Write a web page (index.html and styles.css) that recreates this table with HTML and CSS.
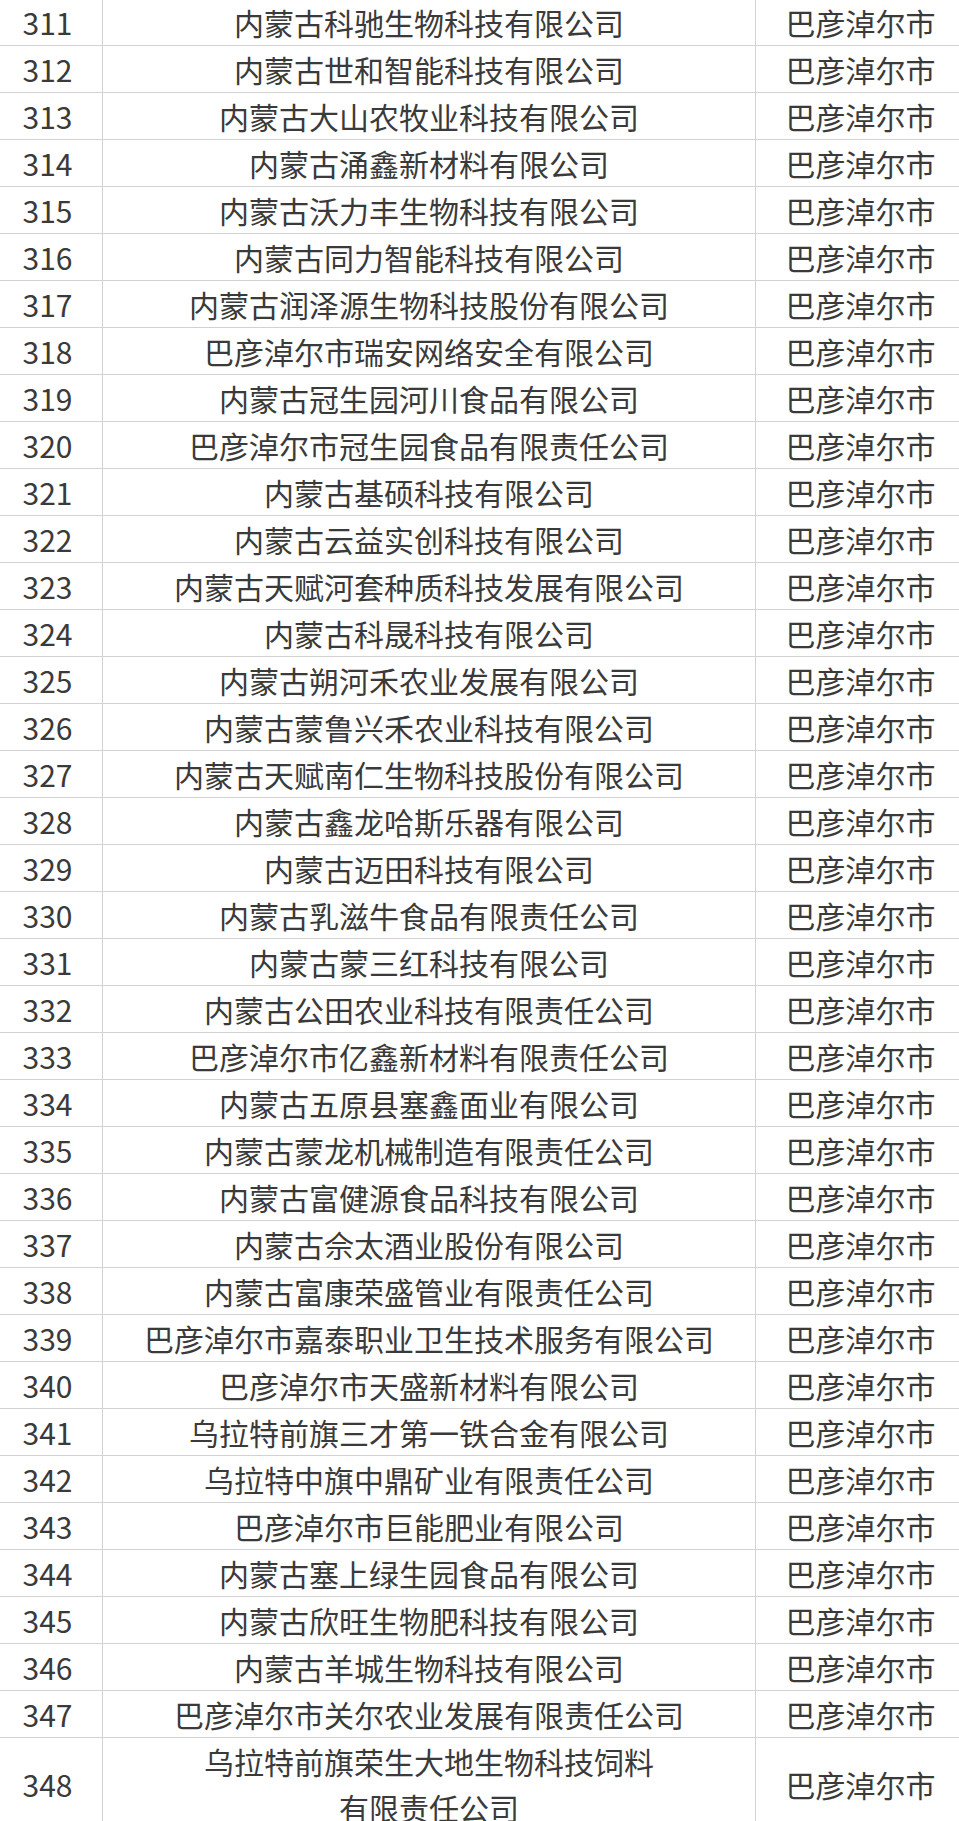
FILE: index.html
```html
<!DOCTYPE html>
<html lang="zh-CN">
<head>
<meta charset="utf-8">
<link rel="stylesheet" href="styles.css">
</head>
<body>
<div class="table">
  <div class="row"><div class="cell num">311</div><div class="cell name">内蒙古科驰生物科技有限公司</div><div class="cell city">巴彦淖尔市</div></div>
  <div class="row"><div class="cell num">312</div><div class="cell name">内蒙古世和智能科技有限公司</div><div class="cell city">巴彦淖尔市</div></div>
  <div class="row"><div class="cell num">313</div><div class="cell name">内蒙古大山农牧业科技有限公司</div><div class="cell city">巴彦淖尔市</div></div>
  <div class="row"><div class="cell num">314</div><div class="cell name">内蒙古涌鑫新材料有限公司</div><div class="cell city">巴彦淖尔市</div></div>
  <div class="row"><div class="cell num">315</div><div class="cell name">内蒙古沃力丰生物科技有限公司</div><div class="cell city">巴彦淖尔市</div></div>
  <div class="row"><div class="cell num">316</div><div class="cell name">内蒙古同力智能科技有限公司</div><div class="cell city">巴彦淖尔市</div></div>
  <div class="row"><div class="cell num">317</div><div class="cell name">内蒙古润泽源生物科技股份有限公司</div><div class="cell city">巴彦淖尔市</div></div>
  <div class="row"><div class="cell num">318</div><div class="cell name">巴彦淖尔市瑞安网络安全有限公司</div><div class="cell city">巴彦淖尔市</div></div>
  <div class="row"><div class="cell num">319</div><div class="cell name">内蒙古冠生园河川食品有限公司</div><div class="cell city">巴彦淖尔市</div></div>
  <div class="row"><div class="cell num">320</div><div class="cell name">巴彦淖尔市冠生园食品有限责任公司</div><div class="cell city">巴彦淖尔市</div></div>
  <div class="row"><div class="cell num">321</div><div class="cell name">内蒙古基硕科技有限公司</div><div class="cell city">巴彦淖尔市</div></div>
  <div class="row"><div class="cell num">322</div><div class="cell name">内蒙古云益实创科技有限公司</div><div class="cell city">巴彦淖尔市</div></div>
  <div class="row"><div class="cell num">323</div><div class="cell name">内蒙古天赋河套种质科技发展有限公司</div><div class="cell city">巴彦淖尔市</div></div>
  <div class="row"><div class="cell num">324</div><div class="cell name">内蒙古科晟科技有限公司</div><div class="cell city">巴彦淖尔市</div></div>
  <div class="row"><div class="cell num">325</div><div class="cell name">内蒙古朔河禾农业发展有限公司</div><div class="cell city">巴彦淖尔市</div></div>
  <div class="row"><div class="cell num">326</div><div class="cell name">内蒙古蒙鲁兴禾农业科技有限公司</div><div class="cell city">巴彦淖尔市</div></div>
  <div class="row"><div class="cell num">327</div><div class="cell name">内蒙古天赋南仁生物科技股份有限公司</div><div class="cell city">巴彦淖尔市</div></div>
  <div class="row"><div class="cell num">328</div><div class="cell name">内蒙古鑫龙哈斯乐器有限公司</div><div class="cell city">巴彦淖尔市</div></div>
  <div class="row"><div class="cell num">329</div><div class="cell name">内蒙古迈田科技有限公司</div><div class="cell city">巴彦淖尔市</div></div>
  <div class="row"><div class="cell num">330</div><div class="cell name">内蒙古乳滋牛食品有限责任公司</div><div class="cell city">巴彦淖尔市</div></div>
  <div class="row"><div class="cell num">331</div><div class="cell name">内蒙古蒙三红科技有限公司</div><div class="cell city">巴彦淖尔市</div></div>
  <div class="row"><div class="cell num">332</div><div class="cell name">内蒙古公田农业科技有限责任公司</div><div class="cell city">巴彦淖尔市</div></div>
  <div class="row"><div class="cell num">333</div><div class="cell name">巴彦淖尔市亿鑫新材料有限责任公司</div><div class="cell city">巴彦淖尔市</div></div>
  <div class="row"><div class="cell num">334</div><div class="cell name">内蒙古五原县塞鑫面业有限公司</div><div class="cell city">巴彦淖尔市</div></div>
  <div class="row"><div class="cell num">335</div><div class="cell name">内蒙古蒙龙机械制造有限责任公司</div><div class="cell city">巴彦淖尔市</div></div>
  <div class="row"><div class="cell num">336</div><div class="cell name">内蒙古富健源食品科技有限公司</div><div class="cell city">巴彦淖尔市</div></div>
  <div class="row"><div class="cell num">337</div><div class="cell name">内蒙古佘太酒业股份有限公司</div><div class="cell city">巴彦淖尔市</div></div>
  <div class="row"><div class="cell num">338</div><div class="cell name">内蒙古富康荣盛管业有限责任公司</div><div class="cell city">巴彦淖尔市</div></div>
  <div class="row"><div class="cell num">339</div><div class="cell name">巴彦淖尔市嘉泰职业卫生技术服务有限公司</div><div class="cell city">巴彦淖尔市</div></div>
  <div class="row"><div class="cell num">340</div><div class="cell name">巴彦淖尔市天盛新材料有限公司</div><div class="cell city">巴彦淖尔市</div></div>
  <div class="row"><div class="cell num">341</div><div class="cell name">乌拉特前旗三才第一铁合金有限公司</div><div class="cell city">巴彦淖尔市</div></div>
  <div class="row"><div class="cell num">342</div><div class="cell name">乌拉特中旗中鼎矿业有限责任公司</div><div class="cell city">巴彦淖尔市</div></div>
  <div class="row"><div class="cell num">343</div><div class="cell name">巴彦淖尔市巨能肥业有限公司</div><div class="cell city">巴彦淖尔市</div></div>
  <div class="row"><div class="cell num">344</div><div class="cell name">内蒙古塞上绿生园食品有限公司</div><div class="cell city">巴彦淖尔市</div></div>
  <div class="row"><div class="cell num">345</div><div class="cell name">内蒙古欣旺生物肥科技有限公司</div><div class="cell city">巴彦淖尔市</div></div>
  <div class="row"><div class="cell num">346</div><div class="cell name">内蒙古羊城生物科技有限公司</div><div class="cell city">巴彦淖尔市</div></div>
  <div class="row"><div class="cell num">347</div><div class="cell name">巴彦淖尔市关尔农业发展有限责任公司</div><div class="cell city">巴彦淖尔市</div></div>
  <div class="row"><div class="cell num">348</div><div class="cell name">乌拉特前旗荣生大地生物科技饲料<br>有限责任公司</div><div class="cell city">巴彦淖尔市</div></div>
</div>
</body>
</html>
```

FILE: styles.css
```css
html, body {
  margin: 0;
  padding: 0;
  background: #ffffff;
}
body {
  overflow: hidden;
  font-family: "Noto Sans CJK SC", "Noto Sans", sans-serif;
  color: #3a3a3a;
}
.table {
  width: 972px;
  margin-left: -7px;
  margin-top: -2px;
  border-top: 1px solid #d2d2d2;
}
.row {
  display: grid;
  grid-template-columns: 110px 653px 209px;
  border-bottom: 1px solid #d2d2d2;
}
.cell {
  font-size: 30px;
  line-height: 46px;
  text-align: center;
  display: flex;
  align-items: center;
  justify-content: center;
}
.num, .name {
  border-right: 1px solid #d2d2d2;
}
.name {
  text-align: center;
}
```
